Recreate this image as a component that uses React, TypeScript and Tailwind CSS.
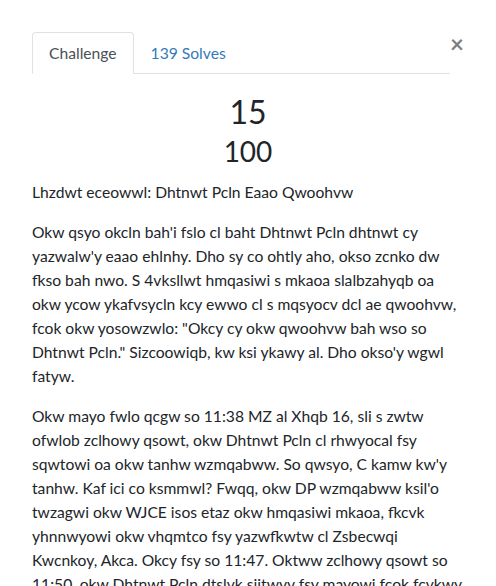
import React from "react";

const paragraphs = [
  "Okw qsyo okcln bah'i fslo cl baht Dhtnwt Pcln dhtnwt cy yazwalw'y eaao ehlnhy. Dho sy co ohtly aho, okso zcnko dw fkso bah nwo. S 4vksllwt hmqasiwi s mkaoa slalbzahyqb oa okw ycow ykafvsycln kcy ewwo cl s mqsyocv dcl ae qwoohvw, fcok okw yosowzwlo: \"Okcy cy okw qwoohvw bah wso so Dhtnwt Pcln.\" Sizcoowiqb, kw ksi ykawy al. Dho okso'y wgwl fatyw.",
  "Okw mayo fwlo qcgw so 11:38 MZ al Xhqb 16, sli s zwtw ofwlob zclhowy qsowt, okw Dhtnwt Pcln cl rhwyocal fsy sqwtowi oa okw tanhw wzmqabww. So qwsyo, C kamw kw'y tanhw. Kaf ici co ksmmwl? Fwqq, okw DP wzmqabww ksil'o twzagwi okw WJCE isos etaz okw hmqasiwi mkaoa, fkcvk yhnnwyowi okw vhqmtco fsy yazwfkwtw cl Zsbecwqi Kwcnkoy, Akca. Okcy fsy so 11:47. Oktww zclhowy qsowt so 11:50, okw Dhtnwt Pcln dtslvk sjitwyy fsy mayowi fcok fcvkwy",
];

export default function App() {
  return (
    <div className="w-[496px] h-[586px] overflow-hidden bg-white px-8 pt-8 font-['Lato',sans-serif] text-[15.65px] leading-6 text-[#212529]">
      {/* tabs + close */}
      <div className="flex items-start">
        <div className="flex flex-1 border-b border-[#dee2e6] -mt-[0.5px]">
          <div className="-mb-px rounded-t border border-[#dee2e6] border-b-white bg-white px-4 py-2 text-[#495057]">
            Challenge
          </div>
          <div className="-mb-px border border-transparent px-4 py-2 text-[#337ab7]">
            139 Solves
          </div>
        </div>
        <button className="text-[24px] font-bold leading-none text-black opacity-50">
          ×
        </button>
      </div>

      <h2 className="mt-[19px] mb-1 text-center text-[32px] leading-[1.2]">15</h2>
      <h3 className="mb-3 text-center text-[28px] leading-[1.2]">100</h3>

      <p className="mb-4">Lhzdwt eceowwl: Dhtnwt Pcln Eaao Qwoohvw</p>
      {paragraphs.map((t, i) => (
        <p key={i} className="mb-4">
          {t}
        </p>
      ))}
    </div>
  );
}
